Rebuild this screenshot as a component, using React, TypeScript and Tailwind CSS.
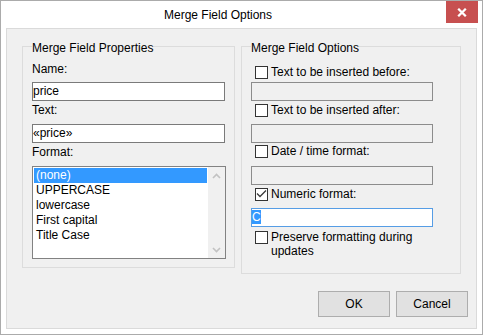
import React from "react";

function Checkbox({ checked }: { checked?: boolean }) {
  return (
    <div className="mt-[1px] w-[13px] h-[13px] shrink-0 border border-[#333333] bg-white flex items-center justify-center">
      {checked && (
        <svg width="11" height="11" viewBox="0 0 11 11">
          <path d="M1 4.5 L4 7.5 L10 1.5" fill="none" stroke="#3a3a3a" strokeWidth="1.3" />
        </svg>
      )}
    </div>
  );
}

function CheckRow({ label, checked, className }: { label: React.ReactNode; checked?: boolean; className: string }) {
  return (
    <div className={"flex items-start ml-[4px] " + className}>
      <Checkbox checked={checked} />
      <span className="ml-[3px] leading-[14px] text-black">{label}</span>
    </div>
  );
}

function DisabledField({ className }: { className: string }) {
  return <div className={"w-[182px] h-[19px] border border-[#8c8c8c] bg-[#f0f0f0] " + className} />;
}

export default function App() {
  const items = ["(none)", "UPPERCASE", "lowercase", "First capital", "Title Case"];
  return (
    <div className="w-[483px] h-[335px] border border-[#ababab] bg-white flex flex-col font-['Liberation_Sans',Arial,sans-serif] text-[12px] text-black">
      {/* Title bar */}
      <div className="h-[27px] flex items-start shrink-0">
        <div className="flex-1 pl-[163px] pt-[7px] leading-[14px] text-black">Merge Field Options</div>
        <div className="mr-[4px] w-[32px] h-[22px] bg-[#c75050] flex items-center justify-center pt-[1px]">
          <svg width="10" height="9" viewBox="0 0 10 9">
            <path d="M1.2 0.8 L8.8 8.2 M8.8 0.8 L1.2 8.2" stroke="#ffffff" strokeWidth="2.3" strokeLinecap="butt" />
          </svg>
        </div>
      </div>

      {/* Body */}
      <div className="mx-[5px] mb-[5px] flex-1 border border-[#dadada] bg-[#f0f0f0] flex flex-col">
        <div className="flex items-start ml-[15px] mt-[17px] gap-[6px]">
          {/* Left group */}
          <div className="relative w-[213px] h-[222px] border border-[#dcdcdc] pl-[9px] pt-[15px]">
            <span className="absolute -top-[6px] left-[9px] bg-[#f0f0f0] leading-[14px]">Merge Field Properties</span>
            <div className="leading-[14px]">Name:</div>
            <div className="mt-[6px] w-[193px] h-[19px] border border-[#7a7a7a] bg-white pt-[1px] leading-[14px]">price</div>
            <div className="mt-[2px] leading-[14px]">Text:</div>
            <div className="mt-[7px] w-[193px] h-[19px] border border-[#7a7a7a] bg-white pt-[1px] leading-[14px]">«price»</div>
            <div className="mt-[2px] leading-[14px]">Format:</div>
            <div className="mt-[7px] w-[194px] h-[93px] border border-[#828282] bg-white flex">
              <div className="flex-1 p-[1px]">
                {items.map((it, i) => (
                  <div
                    key={it}
                    className={
                      i === 0
                        ? "h-[15px] leading-[15px] pl-[2px] bg-[#3399ff] text-white"
                        : "h-[15px] leading-[15px] pl-[2px] text-black"
                    }
                  >
                    {it}
                  </div>
                ))}
              </div>
              <div className="w-[17px] bg-[#f0f0f0] flex flex-col justify-between">
                <div className="h-[17px] flex items-center justify-center">
                  <svg width="9" height="6" viewBox="0 0 9 6">
                    <path d="M1 5 L4.5 1.5 L8 5" fill="none" stroke="#c2c2c2" strokeWidth="1.6" />
                  </svg>
                </div>
                <div className="h-[17px] flex items-center justify-center">
                  <svg width="9" height="6" viewBox="0 0 9 6">
                    <path d="M1 1 L4.5 4.5 L8 1" fill="none" stroke="#c2c2c2" strokeWidth="1.6" />
                  </svg>
                </div>
              </div>
            </div>
          </div>

          {/* Right group */}
          <div className="relative w-[220px] h-[228px] border border-[#dcdcdc] pl-[9px] pt-[18px]">
            <span className="absolute -top-[6px] left-[9px] bg-[#f0f0f0] leading-[14px]">Merge Field Options</span>
            <CheckRow label="Text to be inserted before:" className="" />
            <DisabledField className="mt-[3px]" />
            <CheckRow label="Text to be inserted after:" className="mt-[2px]" />
            <DisabledField className="mt-[7px]" />
            <CheckRow label="Date / time format:" className="mt-[1px]" />
            <DisabledField className="mt-[8px]" />
            <CheckRow label="Numeric format:" checked className="mt-[2px]" />
            <div className="mt-[7px] w-[182px] h-[19px] border border-[#569de5] bg-white pt-[1px] leading-[14px]">
              <span className="bg-[#3399ff] text-white">C</span>
            </div>
            <CheckRow
              label={
                <>
                  Preserve formatting during
                  <br />
                  updates
                </>
              }
              className="mt-[3px]"
            />
          </div>
        </div>

        {/* Buttons */}
        <div className="flex justify-end gap-[6px] mt-[17px] pr-[8px]">
          <button className="w-[72px] h-[26px] border border-[#adadad] bg-[#e1e1e1] text-black leading-[14px]">OK</button>
          <button className="w-[72px] h-[26px] border border-[#adadad] bg-[#e1e1e1] text-black leading-[14px]">Cancel</button>
        </div>
      </div>
    </div>
  );
}
